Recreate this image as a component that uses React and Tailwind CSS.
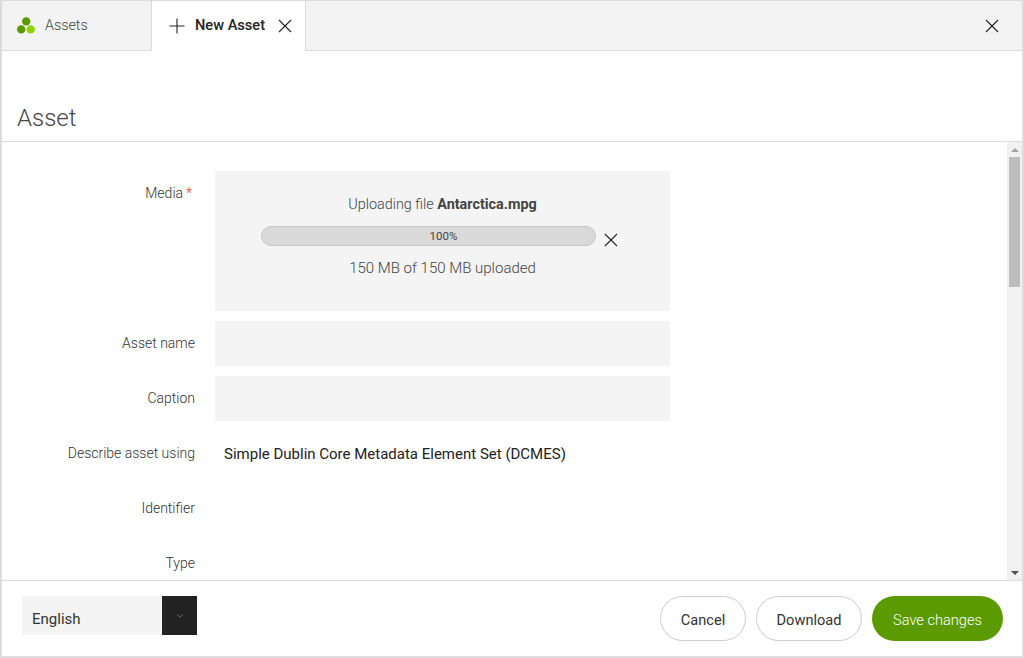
import { ChevronDown } from 'lucide-react'

const font = { fontFamily: 'Roboto, "Liberation Sans", sans-serif' }

function Cross({ size = 14, className = '' }) {
  return (
    <svg width={size} height={size} viewBox="0 0 14 14" className={className} fill="none" stroke="currentColor" strokeWidth="1.1">
      <path d="M1 1 13 13M13 1 1 13" />
    </svg>
  )
}

function Logo() {
  return (
    <svg width="18" height="17" viewBox="0 0 18 17">
      <circle cx="9.2" cy="4.4" r="4.2" fill="#5b9a00" />
      <circle cx="4.2" cy="12.4" r="4.2" fill="#5b9a00" />
      <circle cx="13.7" cy="12.4" r="4.2" fill="#8fd400" />
    </svg>
  )
}

function Row({ label, required, children }) {
  return (
    <div className="flex gap-5 shrink-0">
      <div className="w-[193px] h-[45px] flex items-center justify-end text-[14px] font-light text-[#333]">
        {label}
        {required && <span className="text-[#e5382b] ml-[3px] mr-[3px]">*</span>}
      </div>
      <div className="w-[455px]">{children}</div>
    </div>
  )
}

export default function App() {
  return (
    <div style={font} className="w-[1024px] h-[658px] bg-[#dcdcdc] pt-px pr-0.5 pb-0.5 overflow-hidden flex flex-col">
      {/* Tabs */}
      <div className="h-[49px] flex shrink-0 bg-[#dcdcdc] pl-0.5">
        <div className="w-[149px] bg-[#f3f3f3] rounded-t-[2px] flex items-center pl-[15px] gap-[10px] text-[14.3px] font-light text-[#444]">
          <Logo />
          <span>Assets</span>
        </div>
        <div className="w-[153px] ml-px h-[50px] bg-white flex items-center pl-[17px] text-[#222] relative">
          <svg width="16" height="16" viewBox="0 0 16 16" fill="none" stroke="currentColor" strokeWidth="1.1">
            <path d="M8 0.5V15.5M0.5 8H15.5" />
          </svg>
          <span className="ml-[10px] text-[14.6px] font-medium">New Asset</span>
          <Cross size={14} className="ml-[13px]" />
        </div>
        <div className="flex-1 ml-px bg-[#f3f3f3] rounded-tr-[2px] flex items-center justify-end pr-[23px] text-[#222]">
          <Cross size={14} />
        </div>
      </div>

      <div className="flex-1 ml-0.5 mt-px bg-[#dcdcdc] flex flex-col min-h-0">
        {/* Header */}
        <div className="h-[90px] shrink-0 bg-white flex items-end pl-[15px] pb-[7px]">
          <h1 className="text-[24px] font-light text-[#444] leading-[32px]">Asset</h1>
        </div>

        {/* Body */}
        <div className="h-[438px] shrink-0 mt-px bg-white flex overflow-hidden">
          <div className="flex-1 pt-[29px] flex flex-col gap-[10px]">
            <Row label="Media" required>
              <div className="h-[140px] bg-[#f4f4f4] flex flex-col items-center pt-[24px] font-light text-[#444]">
                <div className="leading-[18px] pt-px text-[14.4px]">
                  Uploading file <b className="font-bold">Antarctica.mpg</b>
                </div>
                <div className="flex items-center self-start mt-[11px] ml-[46px]">
                  <div className="w-[335px] h-[20px] rounded-full bg-[#d9d9d9] border border-[#c8c8c8] flex items-center justify-center text-[11.5px] font-normal text-[#444] pl-[30px] pt-px">
                    100%
                  </div>
                  <Cross size={14} className="ml-[8px] mt-[8px] text-[#222]" />
                </div>
                <div className="mt-[12px] leading-[18px] text-[15px]">150 MB of 150 MB uploaded</div>
              </div>
            </Row>
            <Row label="Asset name">
              <div className="h-[45px] bg-[#f4f4f4]" />
            </Row>
            <Row label="Caption">
              <div className="h-[45px] bg-[#f4f4f4]" />
            </Row>
            <Row label="Describe asset using">
              <div className="h-[45px] flex items-center pl-[9px] pt-px text-[15px] text-[#222]">
                Simple Dublin Core Metadata Element Set (DCMES)
              </div>
            </Row>
            <Row label="Identifier" />
            <Row label="Type" />
          </div>

          {/* Scrollbar */}
          <div className="w-[15px] shrink-0 bg-[#f1f1f1] flex flex-col items-center relative">
            <div className="h-[15px] flex items-center justify-center">
              <div className="w-0 h-0 border-x-[4px] border-x-transparent border-b-[4px] border-b-[#a3a3a3]" />
            </div>
            <div className="w-[11px] h-[130px] bg-[#bdbdbd]" />
            <div className="absolute bottom-0 h-[15px] flex items-center justify-center">
              <div className="w-0 h-0 border-x-[4px] border-x-transparent border-t-[4px] border-t-[#505050]" />
            </div>
          </div>
        </div>

        {/* Footer */}
        <div className="flex-1 mt-px bg-white flex items-center justify-between pl-5 pr-[19px]">
          <div className="flex h-[39px] -mt-[6px]">
            <div className="w-[140px] bg-[#f4f4f4] flex items-center pl-[10px] pt-[7px] text-[15px] text-[#333]">English</div>
            <div className="w-[35px] bg-[#222] flex items-center justify-center text-[#999]">
              <ChevronDown size={10} strokeWidth={1.5} />
            </div>
          </div>
          <div className="flex gap-[10px] text-[14.6px]">
            <button className="w-[86px] h-[45px] pt-1 rounded-full border border-[#ccc] bg-white text-[#333]">Cancel</button>
            <button className="w-[106px] h-[45px] pt-1 rounded-full border border-[#ccc] bg-white text-[#333]">Download</button>
            <button className="w-[131px] h-[45px] pt-1 rounded-full bg-[#5b9a00] text-white font-light">Save changes</button>
          </div>
        </div>
      </div>
    </div>
  )
}
